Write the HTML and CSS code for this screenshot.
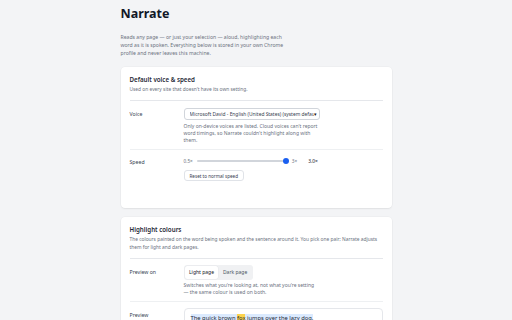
FILE: index.html
```html
<!DOCTYPE html>
<html lang="en">
<head>
<meta charset="utf-8">
<title>Narrate options</title>
<link rel="stylesheet" href="styles.css">
</head>
<body>
<main class="page">
  <h1 class="title">Narrate</h1>
  <p class="intro">Reads any page — or just your selection — aloud, highlighting each word as it is spoken. Everything below is stored in your own Chrome profile and never leaves this machine.</p>

  <section class="card card-voice">
    <h2 class="card-title">Default voice &amp; speed</h2>
    <p class="card-sub">Used on every site that doesn't have its own setting.</p>
    <div class="row">
      <div class="label label-select">Voice</div>
      <div class="control">
        <div class="select"><span class="select-text">Microsoft David - English (United States) (system default)</span><span class="caret">▾</span></div>
        <p class="help">Only on-device voices are listed. Cloud voices can't report word timings, so Narrate couldn't highlight along with them.</p>
      </div>
    </div>
    <div class="row row-speed">
      <div class="label label-slider">Speed</div>
      <div class="control">
        <div class="slider-line">
          <span class="tick">0.5×</span>
          <div class="track"><div class="thumb"></div></div>
          <span class="tick">3×</span>
          <span class="value">3.0×</span>
        </div>
        <button class="btn" type="button">Reset to normal speed</button>
      </div>
    </div>
  </section>

  <section class="card">
    <h2 class="card-title">Highlight colours</h2>
    <p class="card-sub">The colours painted on the word being spoken and the sentence around it. You pick one pair; Narrate adjusts them for light and dark pages.</p>
    <div class="row row-tight">
      <div class="label label-seg">Preview on</div>
      <div class="control">
        <div class="seg"><span class="seg-item active">Light page</span><span class="seg-item">Dark page</span></div>
        <p class="help help-tight">Switches what you're looking at, not what you're setting — the same colour is used on both.</p>
      </div>
    </div>
    <div class="row row-tight">
      <div class="label label-preview">Preview</div>
      <div class="control">
        <div class="preview"><span class="sentence">The quick brown <span class="word">fox</span> jumps over the lazy dog.</span></div>
      </div>
    </div>
  </section>
</main>
</body>
</html>
```

FILE: styles.css
```css
* { box-sizing: border-box; }
html, body { margin: 0; padding: 0; }
body {
  background: #f3f4f6;
  font-family: "Noto Sans", "Open Sans", sans-serif;
  color: #1f2937;
  overflow: hidden;
}
.page {
  width: 271px;
  margin: 0 auto;
  padding-top: 6px;
}
.title {
  margin: 0;
  font-size: 12.5px;
  line-height: 16px;
  font-weight: 700;
  color: #111827;
}
.intro {
  margin: 11px 0 0;
  width: 168px;
  font-size: 5.1px;
  line-height: 8px;
  color: #6b7280;
}
.card {
  background: #fff;
  border-radius: 4px;
  box-shadow: 0 0 0 0.5px rgba(0,0,0,0.04), 0 1px 2px rgba(0,0,0,0.06);
  padding: 8px 9px 0;
  margin-top: 9px;
}
.card-voice { margin-top: 10px; padding-bottom: 22px; }
.card-title {
  margin: 0;
  font-size: 6.2px;
  line-height: 10px;
  font-weight: 600;
  color: #1f2937;
}
.card-sub {
  margin: 0;
  font-size: 4.85px;
  line-height: 8px;
  color: #6b7280;
  padding-bottom: 7px;
  border-bottom: 1px solid #e5e7eb;
}
.row {
  display: flex;
  padding: 7px 0 5px;
  border-bottom: 1px solid #eef0f2;
}
.row-tight { padding-top: 6px; }
.row:last-child { border-bottom: 0; }
.label {
  width: 54px;
  flex: none;
  font-size: 5.2px;
  color: #374151;
}
.label-select { line-height: 12px; }
.label-slider { line-height: 6px; margin-top: 1px; }
.label-seg { line-height: 15px; }
.label-preview { line-height: 14px; }
.control { flex: 1; min-width: 0; font-size: 5px; }
.select {
  width: 136px;
  height: 12px;
  border: 1px solid #d1d5db;
  border-radius: 3px;
  display: flex;
  align-items: center;
  padding: 0 2px 0 5px;
  font-size: 4.9px;
  color: #374151;
  white-space: nowrap;
  overflow: hidden;
}
.select-text { overflow: hidden; flex: 1; min-width: 0; }
.caret { font-size: 5px; color: #111; flex: none; }
.help {
  margin: 3px 0 0;
  width: 136px;
  font-size: 5px;
  line-height: 7px;
  color: #6b7280;
}
.help-tight { margin-top: 2px; }
.row-speed { padding-top: 8px; }
.slider-line {
  display: flex;
  align-items: center;
  height: 6px;
  font-size: 4.7px;
  color: #6b7280;
}
.track {
  position: relative;
  width: 90px;
  height: 1.5px;
  background: #d1d5db;
  border-radius: 1px;
  margin: 0 5px 0 4px;
}
.thumb {
  position: absolute;
  right: -2px;
  top: -2.25px;
  width: 6px;
  height: 6px;
  border-radius: 50%;
  background: #1a5ff0;
}
.value { margin-left: 11px; color: #111827; font-size: 4.9px; }
.btn {
  display: block;
  margin-top: 6px;
  height: 11px;
  padding: 0 5px;
  border: 1px solid #e0e3e8;
  border-radius: 3px;
  background: #fff;
  font-family: inherit;
  font-size: 4.6px;
  color: #374151;
}
.seg {
  display: flex;
  width: max-content;
  background: #f0f1f3;
  border-radius: 3px;
  padding: 1px;
  font-size: 5px;
}
.seg-item {
  height: 13px;
  line-height: 13px;
  padding: 0 4.5px;
  color: #4b5563;
}
.seg-item.active {
  background: #fff;
  border-radius: 2.5px;
  color: #111827;
  box-shadow: 0 0 0 0.5px #e5e7eb;
}
.preview {
  border: 1px solid #e5e7eb;
  border-radius: 4px;
  padding: 5px 6px;
  font-size: 5.8px;
  line-height: 9px;
  color: #1f2937;
}
.sentence { background: #dbeafe; }
.word { background: #fcd34d; }
```
